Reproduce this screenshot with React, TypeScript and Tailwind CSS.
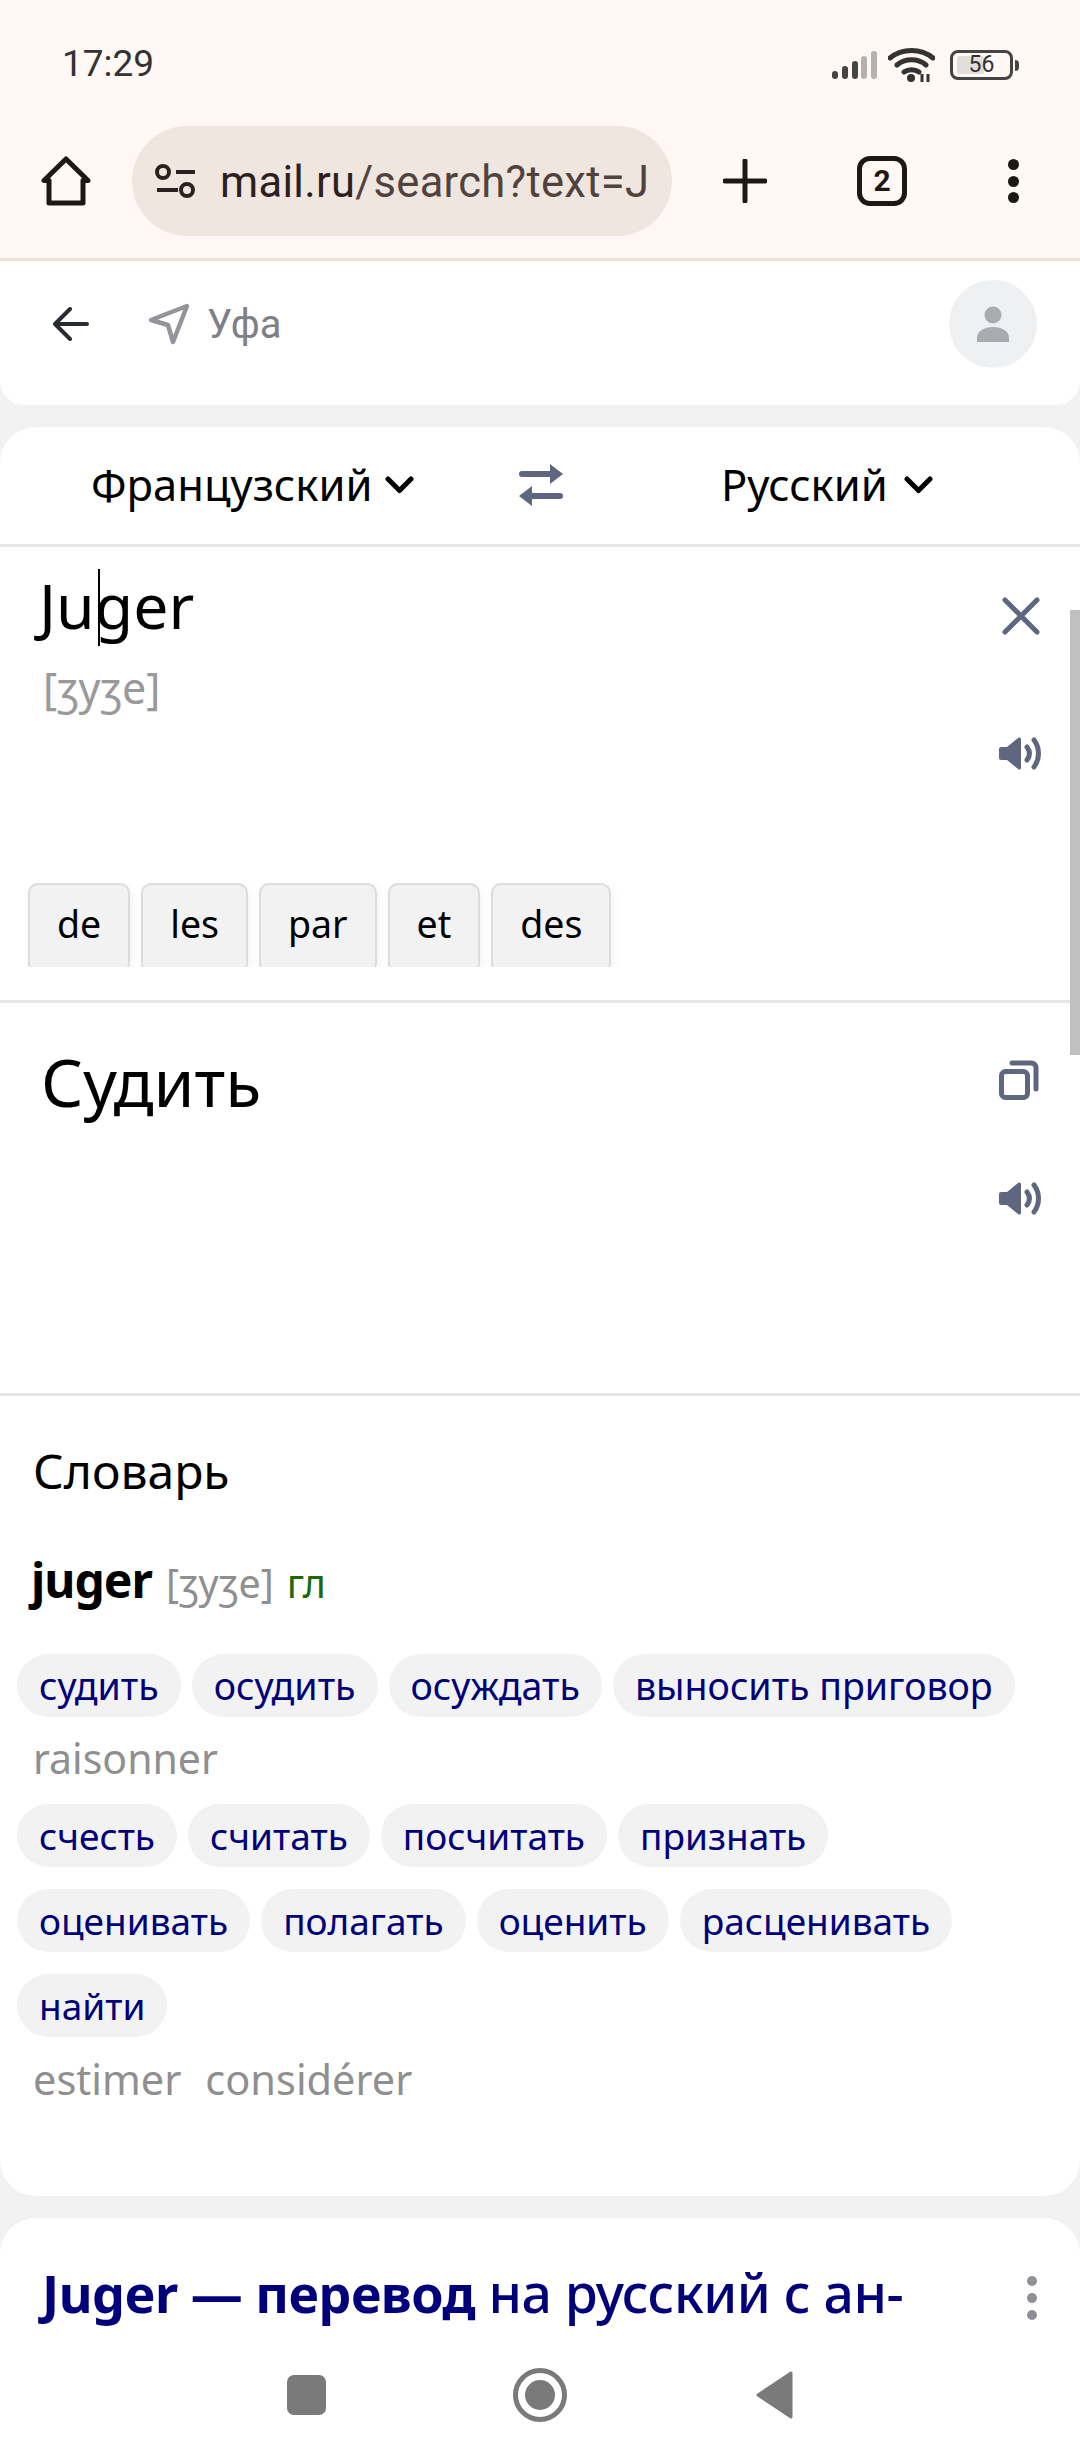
import React from 'react';

const firstChips = ['судить', 'осудить', 'осуждать', 'выносить приговор'];
const secondChips = ['счесть', 'считать', 'посчитать', 'признать', 'оценивать', 'полагать', 'оценить', 'расценивать', 'найти'];
const hints = ['de', 'les', 'par', 'et', 'des'];

const SLATE = '#5f6780';
const INK = '#1f1714';

const Speaker: React.FC = () => (
  <svg width="44" height="33" viewBox="0 0 44 33" fill="none">
    <path d="M2 10h6L19 1c1-1 3-.5 3 1v29c0 1.500-2 2-3 1L8 23H2c-1 0-2-1-2-2v-9c0-1 1-2 2-2z" fill={SLATE} />
    <path d="M28 10c3 4 3 9 0 13M35 3c6 8 6 19 0 27" stroke={SLATE} strokeWidth="5" strokeLinecap="round" />
  </svg>
);

const Chip: React.FC<{ text: string; large?: boolean }> = ({ text, large }) => (
  <span className={`h-[63px] px-[22px] rounded-full bg-[#f2f2f2] leading-[63px] text-[#00007a] ${large ? 'text-[37.5px]' : 'text-[37px]'}`}>{text}</span>
);

const Chevron: React.FC = () => (
  <svg width="29" height="18" viewBox="0 0 29 18" fill="none">
    <path d="M3 3l11.500 11.500L26 3" stroke="#000" strokeWidth="5" strokeLinecap="round" strokeLinejoin="round" />
  </svg>
);

const App: React.FC = () => {
  return (
    <div className="relative w-[1080px] h-[2460px] overflow-hidden bg-[#f2f2f2] font-['Noto_Sans',sans-serif] text-black">
      {/* Status bar and browser toolbar */}
      <div className="h-[261px] bg-[#fff8f5] border-b-[3px] border-[#f2e0d9]">
        <div className="h-[126px] pl-[62px] pr-[61px] pt-[40px] flex justify-between items-start">
          <span className="font-['Roboto',sans-serif] text-[37px] leading-[48px] text-[#333]">17:29</span>
          <div className="flex items-center h-[34px] mt-[8px]">
            <svg width="45" height="28" viewBox="0 0 45 28">
              <rect x="0" y="20" width="6" height="8" rx="3" fill="#444" />
              <rect x="10" y="15" width="6" height="13" rx="3" fill="#444" />
              <rect x="20" y="10" width="6" height="18" rx="3" fill="#444" />
              <rect x="29" y="5" width="6" height="23" rx="3" fill="#b5b1b0" />
              <rect x="39" y="0" width="6" height="28" rx="3" fill="#b5b1b0" />
            </svg>
            <svg width="47" height="34" viewBox="0 0 47 34" fill="none" className="ml-[11px]">
              <path d="M2 10c12-10 31-10 43 0M9 17c8-7 21-7 29 0M16 24c4-3 11-3 15 0" stroke="#333" strokeWidth="5" strokeLinecap="round" />
              <circle cx="23" cy="30" r="4" fill="#333" />
              <path d="M34 26v8M40 26v8" stroke="#333" strokeWidth="3" />
            </svg>
            <div className="relative w-[63px] h-[30px] rounded-[8px] border-[3px] border-[#444] ml-[15px]">
              <div className="absolute left-[4px] top-[3px] bottom-[3px] w-[27px] rounded-[2px] bg-[#e2dedc]" />
              <span className="absolute inset-0 text-center font-['Roboto',sans-serif] text-[23px] leading-[24px] text-[#333]">56</span>
            </div>
            <div className="w-[4px] h-[11px] rounded-r-full bg-[#444] ml-[2px]" />
          </div>
        </div>
        <div className="flex items-center h-[110px] pl-[41px]">
          <svg width="50" height="50" viewBox="0 0 50 50" fill="none" className="shrink-0">
            <path d="M25 3L3 24.500h5V47h34V24.500h5z" stroke={INK} strokeWidth="5" strokeLinejoin="round" />
          </svg>
          <div className="ml-[41px] w-[540px] h-[110px] rounded-full bg-[#f0e6e0] flex items-center pl-[23px] overflow-hidden shrink-0">
            <svg width="42" height="42" viewBox="0 0 42 42" fill="none" className="shrink-0">
              <circle cx="8" cy="12" r="6" stroke="#2c211e" strokeWidth="4" />
              <circle cx="32" cy="30" r="6" stroke="#2c211e" strokeWidth="4" />
              <path d="M21 12h19M2 30h21" stroke="#2c211e" strokeWidth="4" />
            </svg>
            <span className="ml-[23px] pt-[3px] whitespace-nowrap font-['Roboto',sans-serif] text-[43.5px] text-[#50433e] tracking-[0.3px]">
              <span className="text-[#2b201d]">mail.ru</span>/search?text=J
            </span>
          </div>
          <svg width="44" height="44" viewBox="0 0 44 44" className="ml-[51px] shrink-0">
            <path d="M22 2v40M2 22h40" stroke={INK} strokeWidth="5" strokeLinecap="round" />
          </svg>
          <div className="ml-[90px] w-[50px] h-[50px] shrink-0 rounded-[13px] border-[5px] border-[#1f1714] flex items-center justify-center font-['Roboto',sans-serif] font-bold text-[30px] leading-none text-[#1f1714]">
            2
          </div>
          <div className="ml-[101px] flex flex-col items-center gap-[5.500px]">
            <span className="w-[11px] h-[11px] rounded-full bg-[#1f1714]" />
            <span className="w-[11px] h-[11px] rounded-full bg-[#1f1714]" />
            <span className="w-[11px] h-[11px] rounded-full bg-[#1f1714]" />
          </div>
        </div>
      </div>

      {/* Search header */}
      <div className="h-[144px] pb-[18px] bg-white rounded-b-[24px] flex items-center pl-[53px] pr-[43px]">
        <svg width="36" height="34" viewBox="0 0 36 34" fill="none" className="shrink-0">
          <path d="M17 2L2 17l15 15M2 17h32" stroke="#2a2c33" strokeWidth="4" strokeLinecap="round" strokeLinejoin="round" />
        </svg>
        <svg width="44" height="44" viewBox="0 0 44 44" fill="none" className="ml-[58px] shrink-0">
          <path d="M40 4L4 18l17 5 5 17z" stroke="#93959b" strokeWidth="4.500" strokeLinejoin="round" />
        </svg>
        <span className="ml-[16px] pt-[2px] text-[40px] text-[#7f8086] font-['Roboto',sans-serif]">Уфа</span>
        <div className="ml-auto w-[88px] h-[88px] rounded-full bg-[#eff0f2] flex items-center justify-center">
          <svg width="36" height="36" viewBox="0 0 36 36">
            <circle cx="18" cy="9" r="8.500" fill="#a9abb0" />
            <path d="M2 36v-4c0-7 7-11 16-11s16 4 16 11v4z" fill="#a9abb0" />
          </svg>
        </div>
      </div>

      {/* Translator card */}
      <div className="mt-[22px] h-[1769px] bg-white rounded-[36px] overflow-hidden">
        <div className="h-[120px] pb-[2px] border-b-[3px] border-[#e6e6e6] flex items-center text-[43.5px] pl-[91px]">
          <span className="w-[279px] whitespace-nowrap">Французский</span>
          <span className="ml-[15px]"><Chevron /></span>
          <svg width="44" height="42" viewBox="0 0 44 42" fill="none" className="ml-[105px]">
            <path d="M3 10h29M41 32H12" stroke={SLATE} strokeWidth="6" strokeLinecap="round" />
            <path d="M31 0l13 10-13 10zM13 22L0 32l13 10z" fill={SLATE} />
          </svg>
          <span className="ml-[158px] w-[168px] whitespace-nowrap">Русский</span>
          <span className="ml-[15px]"><Chevron /></span>
        </div>

        {/* Source text */}
        <div className="relative h-[456px] border-b-[3px] border-[#e6e6e6] pl-[39px]">
          <div className="relative h-[100px] pt-[18px] text-[62.5px] leading-[80px]">
            Ju<span className="absolute left-[59px] top-[22px] w-[2px] h-[77px] bg-black" />ger
          </div>
          <div className="mt-[13px] ml-[4px] text-[43px] leading-[56px] text-[#999]">[ʒyʒe]</div>
          <svg width="38" height="38" viewBox="0 0 38 38" className="absolute right-[40px] top-[50px]">
            <path d="M3 3l32 32M35 3L3 35" stroke={SLATE} strokeWidth="5" strokeLinecap="round" />
          </svg>
          <div className="absolute right-[37px] top-[190px]"><Speaker /></div>
          <div className="absolute left-[16px] top-[336px] h-[84px] overflow-hidden flex gap-[11px] pl-[12px] pr-[12px]">
            {hints.map((h) => (
              <span key={h} className="h-[90px] px-[27px] rounded-[10px] bg-[#f2f2f2] border-2 border-[#dcdcdc] shadow-[2px_2px_10px_rgba(0,0,0,0.05)] text-[37.5px] leading-[78px]">
                {h}
              </span>
            ))}
          </div>
        </div>

        {/* Translation */}
        <div className="relative h-[393px] border-b-[3px] border-[#e6e6e6] pl-[41px] pt-[36px] text-[66px] leading-[84px]">
          Судить
          <svg width="40" height="40" viewBox="0 0 40 40" fill="none" className="absolute right-[41px] top-[57px]">
            <rect x="2.500" y="11.500" width="26" height="26" rx="4" stroke={SLATE} strokeWidth="5" />
            <path d="M13 3h19c3 0 5 2 5 5v21" stroke={SLATE} strokeWidth="5" strokeLinecap="round" />
          </svg>
          <div className="absolute right-[37px] top-[179px]"><Speaker /></div>
        </div>

        {/* Dictionary */}
        <div className="pl-[17px] pr-[20px]">
          <div className="pl-[16px] mt-[47px] text-[48px] leading-[56px]">Словарь</div>
          <div className="pl-[14px] mt-[53px] flex items-baseline h-[56px]">
            <span className="text-[48px] leading-[56px] font-bold tracking-[-1px]">juger</span>
            <span className="ml-[14px] text-[39.5px] text-[#8f8f8f]">[ʒyʒe]</span>
            <span className="ml-[13px] text-[39.5px] text-[#1a6a0a]">гл</span>
          </div>
          <div className="mt-[46px] flex flex-wrap gap-[11px]">
            {firstChips.map((c) => <Chip key={c} text={c} large />)}
          </div>
          <div className="pl-[16px] mt-[15px] text-[41px] leading-[52px] text-[#8f8f8f]">raisonner</div>
          <div className="mt-[20px] flex flex-wrap gap-x-[11px] gap-y-[22px]">
            {secondChips.map((c) => <Chip key={c} text={c} />)}
          </div>
          <div className="pl-[16px] mt-[16px] flex gap-[24px] text-[41.5px] leading-[52px] text-[#8f8f8f]">
            <span>estimer</span>
            <span>considérer</span>
          </div>
        </div>
      </div>

      {/* Next search result */}
      <div className="mt-[22px] h-[152px] bg-white rounded-t-[36px] flex items-start pl-[42px] pr-[43px] pt-[41px]">
        <span className="text-[53.5px] leading-[68px] font-medium text-[#00007a] whitespace-nowrap tracking-[-0.5px]">
          <span className="font-bold text-[52px]">Juger — перевод</span> на русский с ан-
        </span>
        <div className="ml-auto mt-[17px] flex flex-col gap-[7px]">
          <span className="w-[10px] h-[10px] rounded-full bg-[#8f8f95]" />
          <span className="w-[10px] h-[10px] rounded-full bg-[#8f8f95]" />
          <span className="w-[10px] h-[10px] rounded-full bg-[#8f8f95]" />
        </div>
      </div>

      {/* Android navigation */}
      <div className="h-[90px] bg-white flex items-start justify-center pt-[5px]">
        <div className="w-[39px] h-[40px] rounded-[7px] bg-[#7a7a7a]" />
        <div className="ml-[187px] w-[54px] h-[54px] -mt-[7px] rounded-full border-[5px] border-[#7a7a7a] flex items-center justify-center">
          <div className="w-[30px] h-[30px] rounded-full bg-[#7a7a7a]" />
        </div>
        <svg width="37" height="50" viewBox="0 0 37 50" className="ml-[189px] -mt-[5px]">
          <path d="M35 3v44L2 25z" fill="#7a7a7a" stroke="#7a7a7a" strokeWidth="3" strokeLinejoin="round" />
        </svg>
      </div>

      {/* Page scrollbar */}
      <div className="absolute right-0 top-[610px] w-[10px] h-[445px] bg-[#c0c0c0]" />
    </div>
  );
};

export default App;
